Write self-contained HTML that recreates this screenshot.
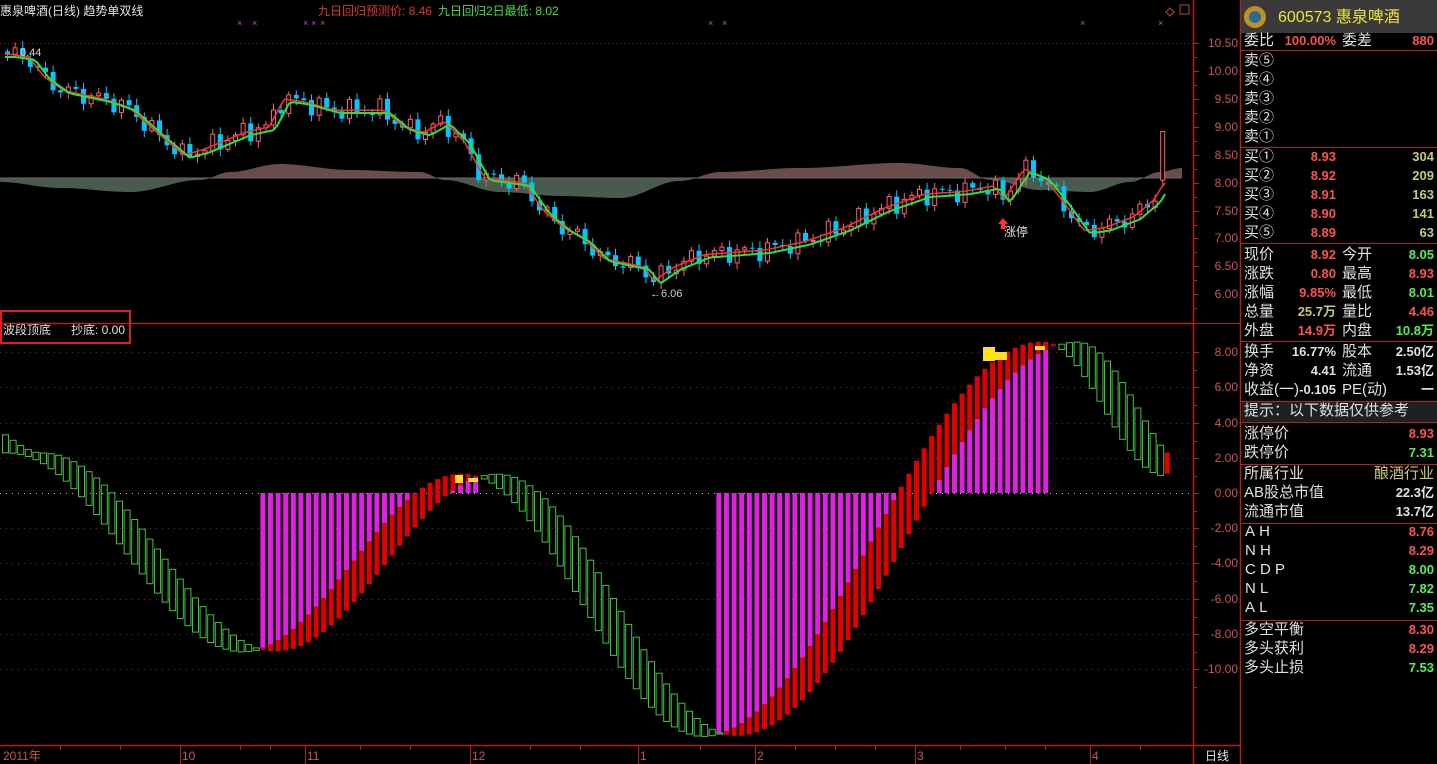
<!DOCTYPE html>
<html><head><meta charset="utf-8">
<style>
html,body{margin:0;padding:0;background:#000;}
body{width:1437px;height:764px;position:relative;overflow:hidden;font-family:"Liberation Sans","Noto Sans CJK SC",sans-serif;}
.t{position:absolute;white-space:nowrap;line-height:1;}
#c{position:absolute;left:0;top:0;}
</style></head><body>
<svg id="c" width="1437" height="764" xmlns="http://www.w3.org/2000/svg"></svg>
<div id="txt"></div>
<script>
(function(){
var s='';
function R(x,y,w,h,f,st){if(h<0){y+=h;h=-h;}if(h<1)h=1;s+='<rect x="'+x.toFixed(1)+'" y="'+y.toFixed(1)+'" width="'+w+'" height="'+h.toFixed(1)+'" '+(f?'fill="'+f+'"':'fill="none"')+(st?' stroke="'+st+'" stroke-width="1"':'')+'/>';}
function L(x1,y1,x2,y2,c,w,d){s+='<line x1="'+x1+'" y1="'+y1+'" x2="'+x2+'" y2="'+y2+'" stroke="'+c+'" stroke-width="'+(w||1)+'"'+(d?' stroke-dasharray="'+d+'"':'')+'/>';}
function interp(k,x){for(var i=0;i<k.length-1;i++){if(x<=k[i+1][0]){var a=k[i],b=k[i+1];var t=(x-a[0])/(b[0]-a[0]);if(t<0)t=0;return a[1]+(b[1]-a[1])*t;}}return k[k.length-1][1];}
function interpC(k,x){for(var i=0;i<k.length-1;i++){if(x<=k[i+1][0]){var a=k[i],b=k[i+1];var t=(x-a[0])/(b[0]-a[0]);if(t<0)t=0;t=(1-Math.cos(t*Math.PI))/2;return a[1]+(b[1]-a[1])*t;}}return k[k.length-1][1];}
L(0,323.5,1193,323.5,'#b02020',1.5);
L(0,745.5,1240,745.5,'#b02020',1.5);
L(1193.5,0,1193.5,764,'#b02020',1.5);
L(1240.5,0,1240.5,764,'#b02020',1.5);
L(0,43.5,1193,43.5,'#802020',1,'1,3');
var up=[[10.5,43],[10,71],[9.5,99],[9,127],[8.5,155],[8,183],[7.5,211],[7,238],[6.5,266],[6,294]];
up.forEach(function(a){L(1193,a[1]+0.5,1199,a[1]+0.5,'#b02020');L(1193,a[1]+14.5,1197,a[1]+14.5,'#b02020');});
var lo=[[8,352],[6,387],[4,423],[2,458],[0,493],[-2,528],[-4,563],[-6,599],[-8,634],[-10,669]];
lo.forEach(function(a){L(1193,a[1]+0.5,1199,a[1]+0.5,'#b02020');L(1193,a[1]+18.5,1197,a[1]+18.5,'#b02020');
 if(a[0]==0)L(0,493.5,1190,493.5,'#c0c0c0',1,'1,5');else L(0,a[1]+0.5,1190,a[1]+0.5,'#802020',1,'1,5');});
[180,305,470,638,755,915,1090].forEach(function(x){L(x+0.5,745,x+0.5,764,'#b02020');});
[60,120,240,270,360,410,530,580,700,795,835,875,960,1005,1045,1140].forEach(function(x){L(x+0.5,745,x+0.5,750,'#b02020');});
var bk=[[0,-4],[60,-10],[130,-14],[200,-2],[230,6],[280,14],[350,8],[420,6],[445,-2],[500,-14],[560,-18],[620,-20],[680,-3],[720,6],[800,10],[900,15],[960,10],[990,-2],[1040,-12],[1090,-14],[1130,-4],[1160,6],[1182,10]];
var pa='M0,178',pb='M0,178';
for(var x=0;x<=1182;x+=3){var a=interpC(bk,x);pa+=' L'+x+','+(178-Math.max(a,0));pb+=' L'+x+','+(178-Math.min(a,0));}
pa+=' L1182,178 Z';pb+=' L1182,178 Z';
s+='<path d="'+pa+'" fill="#6a4c4c"/><path d="'+pb+'" fill="#4a5a4c"/>';
L(0,178,1182,178,'#6a6a6a');
var pk=[[5,10.3],[25,10.25],[40,9.9],[60,9.65],[100,9.5],[125,9.35],[150,8.95],[180,8.5],[200,8.6],[240,8.9],[265,9.0],[280,9.5],[300,9.45],[330,9.3],[380,9.3],[400,9.0],[420,8.9],[440,9.1],[460,8.75],[480,8.1],[520,8.0],[540,7.5],[560,7.2],[580,7.0],[600,6.65],[640,6.5],[650,6.25],[670,6.5],[700,6.72],[760,6.8],[800,6.95],[840,7.2],[880,7.55],[920,7.8],[960,7.85],[990,7.95],[1000,7.7],[1020,8.25],[1040,8.1],[1060,7.65],[1080,7.15],[1100,7.2],[1130,7.4],[1150,7.7],[1160,8.0]];
function py(p){return 43+(10.5-p)*56;}
var prev=10.35;
for(var i=0;i<153;i++){var x=5+i*7.6;var t=interp(pk,x);var c=t+0.13*Math.sin(i*1.7)+0.08*Math.sin(i*3.1);var o=prev;
 if(i==152){o=8.05;c=8.92;}
 var hi=Math.max(o,c)+0.04+0.08*Math.abs(Math.sin(i*2.3));var lw=Math.min(o,c)-0.04-0.08*Math.abs(Math.cos(i*1.9));
 if(i==152)hi=8.93;
 var upc=c>=o;var col=upc?'#ff5a78':'#00c8ff';
 L(x+2.5,py(hi),x+2.5,py(lw),col);
 if(upc){R(x+0.5,py(c),4,py(o)-py(c),'#000',col);}else{R(x,py(o),5,py(c)-py(o),col);}
 prev=c;}
var g='',r='';
for(var x=5;x<=1165;x+=4){var v1=interp(pk,x-10)-0.05,v2=interp(pk,x-4);g+=(g?' L':'M')+x+','+py(v1).toFixed(1);r+=(r?' L':'M')+x+','+py(v2).toFixed(1);}
s+='<path d="'+r+'" stroke="#ff3030" stroke-width="1.5" fill="none"/><path d="'+g+'" stroke="#30e030" stroke-width="2" fill="none"/>';
[237,252,303,311,320,708,722,1080,1158].forEach(function(x){s+='<text x="'+x+'" y="26" fill="#d040d0" font-size="9" font-family="Liberation Sans">×</text>';});
var ok=[[-60,4.0],[5,2.3],[240,-9.0],[460,1.1],[700,-13.8],[1040,8.6],[1162,1.0]];
function oy(v){return 493-v*17.6;}
for(var i=0;i<154;i++){var x=2+i*7.6;var v=interpC(ok,x);if(x>1166)break;
 if(x>1160){R(x,oy(2.3),5,oy(1.1)-oy(2.3),'#e00000');break;}
 var pv=interpC(ok,x-34);
 var tp=Math.max(pv,v),bt=Math.min(pv,v);
 var mag=(x>=260&&x<=480)||(x>=716&&x<=1045);
 if(mag){if(tp<0)R(x,oy(0),5,oy(tp)-oy(0),'#e020e0');else if(bt>0)R(x,oy(bt),5,oy(0)-oy(bt),'#e020e0');}
 if(v>=pv){R(x,oy(tp),5,oy(bt)-oy(tp),'#e00000');}
 else{R(x+0.5,oy(tp)+0.5,6,oy(bt)-oy(tp),null,'#40c040');}
}
R(455,475,8,8,'#ffe020');R(468,478,10,4,'#ffe020');R(983,347,12,14,'#ffe020');R(995,352,12,8,'#ffe020');R(1035,346,10,4,'#ffe020');
s+='<rect x="1" y="311" width="129" height="32" fill="none" stroke="#e02020" stroke-width="2"/>';
s+='<rect x="1241" y="0" width="196" height="33" fill="#3a3a3a"/><circle cx="1255" cy="17" r="11" fill="#c09020"/><circle cx="1255" cy="17" r="6" fill="#2a6a9a"/>';
s+='<path d="M1170,8 l4,4 l-4,4 l-4,-4z" fill="none" stroke="#c04040"/><rect x="1180" y="5" width="9" height="9" fill="none" stroke="#c04040"/>';
s+='<path d="M1003,218 l5,6 h-3 v5 h-4 v-5 h-3z" fill="#ff3030"/>';
document.getElementById('c').innerHTML=s;
var h='';
function T(x,y,txt,col,sz,anchor,bold){h+='<div class="t" style="'+(anchor=='r'?'right:'+(1437-x)+'px;':'left:'+x+'px;')+'top:'+y+'px;color:'+col+';font-size:'+sz+'px;'+(bold?'font-weight:bold;':'')+'">'+txt+'</div>';}
T(0,5,'惠泉啤酒(日线) 趋势单双线','#e0e0e0',12);
T(318,5,'九日回归预测价: 8.46','#e03030',12);
T(438,5,'九日回归2日最低: 8.02','#40e040',12);
T(20,48,'0.44','#d0d0d0',11);
T(650,289,'←6.06','#d0d0d0',11);
T(1004,226,'涨停','#e0e0e0',12);
T(3,324,'波段顶底','#e0e0e0',12);
T(71,324,'抄底: 0.00','#e0e0e0',12);
T(1278,10,'600573 惠泉啤酒','#f0e040',16);
up.forEach(function(a){T(1238,a[1]-6,a[0].toFixed(2),'#d05050',12,'r');});
lo.forEach(function(a){T(1238,a[1]-6,a[0].toFixed(2),'#d05050',12,'r');});
T(3,750,'2011年','#d05050',12);
[[182,'10'],[307,'11'],[472,'12'],[640,'1'],[757,'2'],[917,'3'],[1092,'4']].forEach(function(a){T(a[0],750,a[1],'#d05050',12);});
T(1205,750,'日线','#e0e0e0',12);
var W='#e0e0e0',RD='#ff5050',GR='#50f050',YL='#c8c870';
function row(y,l1,v1,c1,l2,v2,c2){T(1244,y-8,l1,W,15);if(v1)T(1336,y-7,v1,c1,13,'r',1);if(l2)T(1342,y-8,l2,W,15);if(v2)T(1434,y-7,v2,c2,13,'r',1);}
row(41,'委比','100.00%',RD,'委差','880',RD);
['卖⑤','卖④','卖③','卖②','卖①'].forEach(function(l,i){row(61+i*19,l);});
[['买①','8.93','304'],['买②','8.92','209'],['买③','8.91','163'],['买④','8.90','141'],['买⑤','8.89','63']].forEach(function(a,i){row(157+i*19,a[0],a[1],RD,null,a[2],YL);});
row(255,'现价','8.92',RD,'今开','8.05',GR);
row(274,'涨跌','0.80',RD,'最高','8.93',RD);
row(293,'涨幅','9.85%',RD,'最低','8.01',GR);
row(312,'总量','25.7万',YL,'量比','4.46',RD);
row(331,'外盘','14.9万',RD,'内盘','10.8万',GR);
row(352,'换手','16.77%',W,'股本','2.50亿',W);
row(371,'净资','4.41',W,'流通','1.53亿',W);
row(390,'收益(一)','-0.105',W,'PE(动)','一',W);
h+='<div style="position:absolute;left:1242px;top:402px;width:195px;height:20px;background:#202020"></div>';
T(1244,403,'提示：以下数据仅供参考',W,15);
row(434,'涨停价',null,null,null,'8.93',RD);
row(453,'跌停价',null,null,null,'7.31',GR);
T(1244,466,'所属行业',W,15);T(1434,466,'酿酒行业',YL,15,'r');
row(493,'AB股总市值',null,null,null,'22.3亿',W);
row(512,'流通市值',null,null,null,'13.7亿',W);
[['AH','8.76',RD],['NH','8.29',RD],['CDP','8.00',GR],['NL','7.82',GR],['AL','7.35',GR]].forEach(function(a,i){T(1245,532+i*19-8,a[0].split('').join('&nbsp;'),W,15);T(1434,532+i*19-7,a[1],a[2],13,'r',1);});
row(630,'多空平衡',null,null,null,'8.30',RD);
row(649,'多头获利',null,null,null,'8.29',RD);
row(668,'多头止损',null,null,null,'7.53',GR);
[50,147,243,341,401,422,464,523,620].forEach(function(y){h+='<div style="position:absolute;left:1241px;top:'+y+'px;width:196px;height:1px;background:#b02020"></div>';});
h+='<div style="position:absolute;left:1193px;top:323px;width:47px;height:1px;background:#b02020"></div>';
document.getElementById('txt').innerHTML=h;
})();
</script>
</body></html>
